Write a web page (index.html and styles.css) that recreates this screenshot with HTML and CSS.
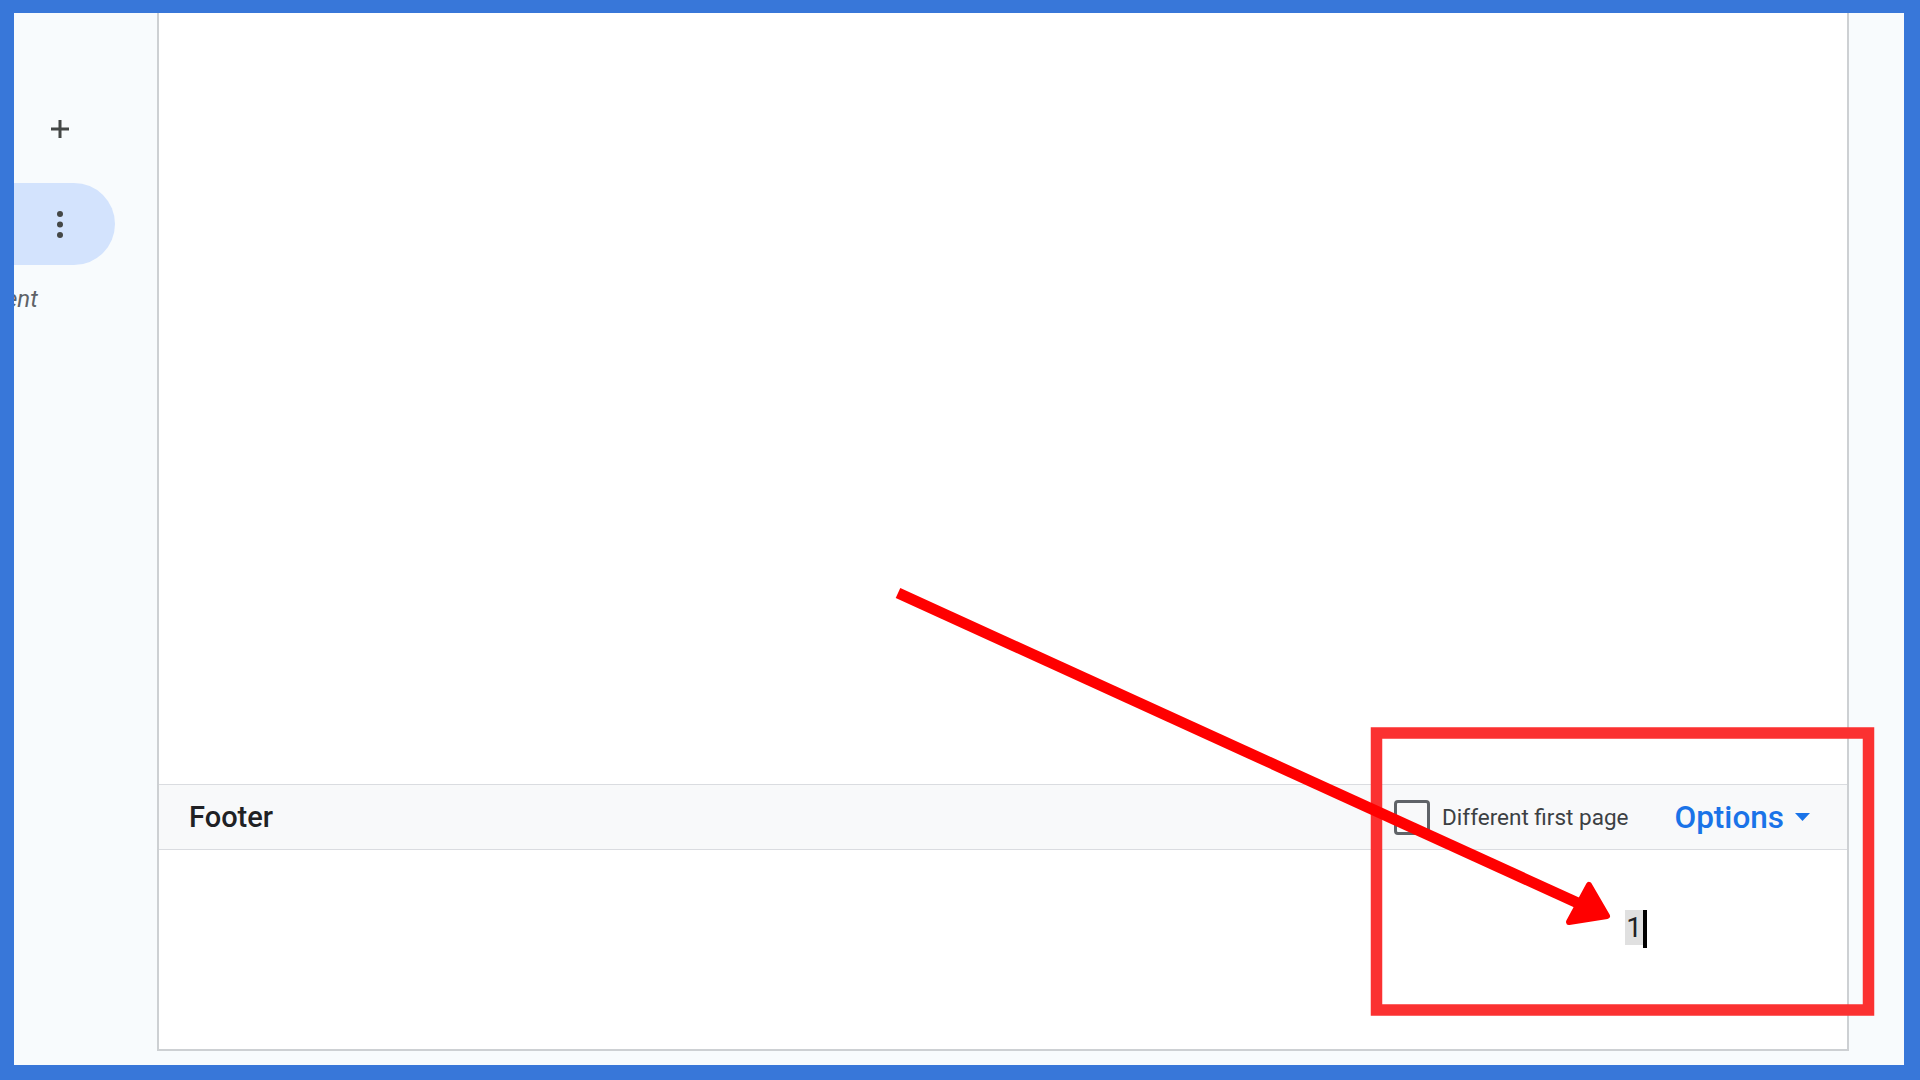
FILE: index.html
```html
<!DOCTYPE html>
<html lang="en">
<head>
<meta charset="UTF-8" />
<meta name="viewport" content="width=device-width, initial-scale=1.0"/>
<title>Footer - page number</title>
<link rel="stylesheet" href="styles.css">
</head>
<body>
  <div class="frame">
    <aside class="rail">
      <div class="rail-add">
        <svg width="20" height="20" viewBox="0 0 20 20"><path d="M10 1v18M1 10h18" stroke="#444746" stroke-width="3"/></svg>
      </div>
      <div class="rail-pill">
        <svg width="6" height="27" viewBox="0 0 6 27"><circle cx="3" cy="3" r="3" fill="#444746"/><circle cx="3" cy="13.5" r="3" fill="#444746"/><circle cx="3" cy="24" r="3" fill="#444746"/></svg>
      </div>
      <div class="rail-label">ent</div>
    </aside>

    <main class="page">
      <div class="page-body"></div>
      <div class="footer-bar">
        <span class="footer-title">Footer</span>
        <span class="checkbox"></span>
        <span class="checkbox-label">Different first page</span>
        <span class="options">Options</span>
        <svg class="options-caret" width="15" height="8" viewBox="0 0 15 8"><path d="M0 0h15L7.5 8z" fill="#1a73e8"/></svg>
      </div>
      <div class="footer-body">
        <span class="pagenum">1</span><span class="caret"></span>
      </div>
    </main>

    <div class="gutter"></div>
  </div>

  <!-- annotation drawn over the screenshot -->
  <svg class="annot" width="1920" height="1080" viewBox="0 0 1920 1080">
    <rect x="1376.5" y="733" width="492" height="277" fill="none" stroke="#fb3131" stroke-width="11.5"/>
    <line x1="898" y1="593" x2="1580" y2="904" stroke="#ff0000" stroke-width="11"/>
    <polygon points="1589,885 1607,916 1569,922" fill="#ff0000" stroke="#ff0000" stroke-width="6" stroke-linejoin="round"/>
  </svg>
</body>
</html>
```

FILE: styles.css
```css
html, body {
  margin: 0;
  height: 100%;
  overflow: hidden;
}
body {
  font-family: Roboto, "Liberation Sans", sans-serif;
  position: relative;
}
.frame {
  box-sizing: border-box;
  width: 1920px;
  height: 1080px;
  border-style: solid;
  border-color: #3877d9;
  border-width: 13px 16px 15px 14px;
  background: #f8fbfd;
  display: flex;
}
.rail {
  width: 143px;
  flex-shrink: 0;
  overflow: hidden;
  display: flex;
  flex-direction: column;
}
.rail-add {
  margin: 106px 0 0 36px;
  height: 20px;
}
.rail-add svg {
  display: block;
}
.rail-pill {
  margin-top: 44px;
  width: 101px;
  height: 82px;
  border-radius: 0 41px 41px 0;
  background: #d3e3fd;
  display: flex;
  align-items: center;
  padding-left: 43px;
  box-sizing: border-box;
}
.rail-pill svg {
  display: block;
}
.rail-label {
  margin: 20px 0 0 -9px;
  font-size: 24px;
  line-height: 28px;
  font-style: italic;
  color: #5f6368;
  white-space: nowrap;
}
.page {
  flex: 1;
  display: flex;
  flex-direction: column;
  background: #fff;
  border: 2px solid #cdd0d3;
  border-top: none;
  margin-bottom: 14px;
}
.page-body {
  height: 771px;
}
.footer-bar {
  height: 64px;
  border-top: 1px solid #dadce0;
  border-bottom: 1px solid #dadce0;
  background: #f8f9fa;
  display: flex;
  align-items: center;
  padding: 0 37px 0 30px;
}
.footer-title {
  flex: 1;
  font-size: 29px;
  font-weight: 500;
  color: #202124;
}
.checkbox {
  width: 30px;
  height: 29px;
  border: 3px solid #5f6368;
  border-radius: 4px;
}
.checkbox-label {
  margin-left: 12px;
  font-size: 22.5px;
  color: #3c4043;
}
.options {
  margin-left: 46px;
  font-size: 31.5px;
  font-weight: 500;
  color: #1a73e8;
}
.options-caret {
  margin-left: 11px;
}
.footer-body {
  flex: 1;
  display: flex;
  justify-content: flex-end;
  align-items: flex-start;
  padding: 60px 200px 0 0;
}
.pagenum {
  font-size: 28px;
  line-height: 35px;
  padding: 0 1px;
  background: #e0e0e0;
  color: #202124;
}
.caret {
  width: 4px;
  height: 38px;
  background: #000;
}
.gutter {
  width: 55px;
  flex-shrink: 0;
}
.annot {
  position: absolute;
  top: 0;
  left: 0;
  pointer-events: none;
}
```
